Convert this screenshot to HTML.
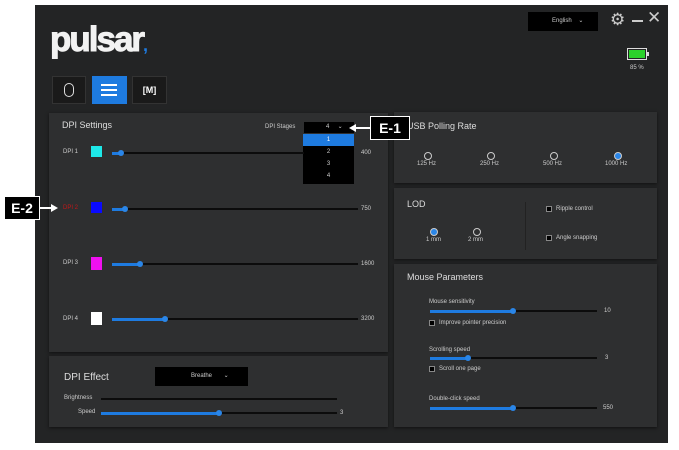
<!DOCTYPE html><html><head><style>
*{margin:0;padding:0;box-sizing:border-box}
body{width:679px;height:450px;background:#fff;position:relative;overflow:hidden;font-family:"Liberation Sans",sans-serif;color:#ddd}
.a{position:absolute}
.app{left:35px;top:5px;width:633px;height:438px;background:#232425}
.p{position:absolute;background:#2e2f30;box-shadow:0 1px 3px #111}
.t{font-size:6px;color:#ccc;position:absolute}
.tr{position:absolute;height:2px;background:#0c0c0c}
.fl{position:absolute;height:3px;background:#1e7be0;top:-0.5px;left:0}
.kn{position:absolute;width:6px;height:6px;border-radius:50%;background:#2a86e8;top:-2px}
.rd{position:absolute;width:8px;height:8px;border-radius:50%;border:1px solid #ccc}
.cb{position:absolute;width:6px;height:6px;background:#000;border:1px solid #888}
.lab{position:absolute;background:#000;color:#fff;font-weight:bold;font-size:14px;border:1px solid #fff;text-align:center;line-height:22px}
</style></head><body>
<div class="a app"></div>
<div class="a" style="left:50px;top:20px;font-size:35px;font-weight:bold;color:#f2f2f2;letter-spacing:-2px;-webkit-text-stroke:1px #f2f2f2">pulsar<span style="color:#1e7be0;font-size:18px;-webkit-text-stroke:0">,</span></div>
<div class="a" style="left:52px;top:76px;width:34px;height:28px;background:#1a1a1a;border:1px solid #333"><div class="a" style="left:11px;top:6px;width:10px;height:14px;border:1.5px solid #ddd;border-radius:5px"></div></div>
<div class="a" style="left:92px;top:76px;width:35px;height:28px;background:#1e7be0"><div class="a" style="left:9px;top:8px;width:16px;height:1.5px;background:#fff"></div><div class="a" style="left:9px;top:13px;width:16px;height:1.5px;background:#fff"></div><div class="a" style="left:9px;top:18px;width:16px;height:1.5px;background:#fff"></div></div>
<div class="a" style="left:132px;top:76px;width:35px;height:28px;background:#1a1a1a;border:1px solid #333;color:#fff;font-size:9px;font-weight:bold;text-align:center;line-height:27px">[M]</div>
<div class="a" style="left:528px;top:12px;width:70px;height:19px;background:#000;font-size:6px;color:#ccc;line-height:19px;padding-left:24px">English &nbsp;&nbsp;&nbsp;⌄</div>
<div class="a" style="left:610px;top:10px;font-size:17px;color:#ccc">⚙</div>
<div class="a" style="left:632px;top:20px;width:11px;height:2px;background:#ccc"></div>
<div class="a" style="left:647px;top:8px;font-size:17px;color:#ccc">✕</div>
<div class="a" style="left:627px;top:48px;width:20px;height:12px;border:1.5px solid #ddd;padding:1px"><div style="width:100%;height:100%;background:#2bd12b"></div></div>
<div class="a" style="left:647px;top:52px;width:2px;height:4px;background:#ddd"></div>
<div class="t" style="left:630px;top:65px">85 %</div>

<div class="p" style="left:49px;top:113px;width:339px;height:239px"></div>
<div class="a" style="left:62px;top:120px;font-size:9px;color:#ddd">DPI Settings</div>
<div class="t" style="left:265px;top:124px">DPI Stages</div>
<div class="a" style="left:304px;top:122px;width:50px;height:11px;background:#000;font-size:6px;color:#ccc;line-height:11px;padding-left:22px">4 &nbsp;&nbsp;&nbsp;&nbsp;⌄</div>
<div class="a" style="left:303px;top:134px;width:51px;height:50px;background:#000;font-size:6px;color:#ccc;text-align:center;line-height:12px">
<div style="background:#1e7be0;color:#fff">1</div><div>2</div><div>3</div><div>4</div></div>
<div class="t" style="left:63px;top:149px">DPI 1</div><div class="a" style="left:91px;top:146px;width:11px;height:11px;background:#1ee8e8"></div>
<div class="tr" style="left:112px;top:152px;width:192px"><div class="fl" style="width:8px"></div><div class="kn" style="left:6px"></div></div><div class="t" style="left:361px;top:150px">400</div>
<div class="t" style="left:63px;top:205px;color:#c01818">DPI 2</div><div class="a" style="left:91px;top:202px;width:11px;height:11px;background:#0a0aff"></div>
<div class="tr" style="left:112px;top:208px;width:246px"><div class="fl" style="width:12px"></div><div class="kn" style="left:10px"></div></div><div class="t" style="left:361px;top:206px">750</div>
<div class="t" style="left:63px;top:260px">DPI 3</div><div class="a" style="left:91px;top:257px;width:11px;height:13px;background:#f010f0"></div>
<div class="tr" style="left:112px;top:263px;width:246px"><div class="fl" style="width:27px"></div><div class="kn" style="left:25px"></div></div><div class="t" style="left:361px;top:261px">1600</div>
<div class="t" style="left:63px;top:316px">DPI 4</div><div class="a" style="left:91px;top:312px;width:11px;height:13px;background:#fff"></div>
<div class="tr" style="left:112px;top:318px;width:246px"><div class="fl" style="width:52px"></div><div class="kn" style="left:50px"></div></div><div class="t" style="left:361px;top:316px">3200</div>

<div class="p" style="left:49px;top:356px;width:339px;height:71px"></div>
<div class="a" style="left:64px;top:372px;font-size:10px;color:#ddd">DPI Effect</div>
<div class="a" style="left:155px;top:367px;width:93px;height:19px;background:#000;font-size:6px;color:#ccc;line-height:19px;padding-left:36px">Breathe &nbsp;&nbsp;&nbsp;&nbsp;&nbsp;&nbsp;⌄</div>
<div class="t" style="left:64px;top:395px">Brightness</div><div class="tr" style="left:101px;top:398px;width:236px"></div>
<div class="t" style="left:78px;top:409px">Speed</div><div class="tr" style="left:101px;top:412px;width:236px"><div class="fl" style="width:118px"></div><div class="kn" style="left:115px"></div></div><div class="t" style="left:340px;top:410px">3</div>

<div class="p" style="left:394px;top:112px;width:263px;height:71px"></div>
<div class="a" style="left:407px;top:121px;font-size:9px;color:#ddd">USB Polling Rate</div>
<div class="rd" style="left:424px;top:152px"></div><div class="t" style="left:417px;top:161px">125 Hz</div>
<div class="rd" style="left:487px;top:152px"></div><div class="t" style="left:480px;top:161px">250 Hz</div>
<div class="rd" style="left:550px;top:152px"></div><div class="t" style="left:543px;top:161px">500 Hz</div>
<div class="rd" style="left:614px;top:152px;background:#2a86e8"></div><div class="t" style="left:605px;top:161px">1000 Hz</div>

<div class="p" style="left:394px;top:188px;width:263px;height:71px"></div>
<div class="a" style="left:407px;top:199px;font-size:9px;color:#ddd">LOD</div>
<div class="rd" style="left:430px;top:228px;background:#2a86e8"></div><div class="t" style="left:426px;top:237px">1 mm</div>
<div class="rd" style="left:473px;top:228px"></div><div class="t" style="left:468px;top:237px">2 mm</div>
<div class="a" style="left:525px;top:202px;width:1px;height:48px;background:#222"></div>
<div class="cb" style="left:546px;top:206px"></div><div class="t" style="left:556px;top:206px">Ripple control</div>
<div class="cb" style="left:546px;top:235px"></div><div class="t" style="left:556px;top:235px">Angle snapping</div>

<div class="p" style="left:394px;top:264px;width:263px;height:163px"></div>
<div class="a" style="left:407px;top:272px;font-size:9px;color:#ddd">Mouse Parameters</div>
<div class="t" style="left:429px;top:299px">Mouse sensitivity</div><div class="tr" style="left:430px;top:310px;width:167px"><div class="fl" style="width:83px"></div><div class="kn" style="left:80px"></div></div><div class="t" style="left:604px;top:308px">10</div>
<div class="cb" style="left:429px;top:320px"></div><div class="t" style="left:439px;top:320px">Improve pointer precision</div>
<div class="t" style="left:429px;top:347px">Scrolling speed</div><div class="tr" style="left:430px;top:357px;width:167px"><div class="fl" style="width:38px"></div><div class="kn" style="left:35px"></div></div><div class="t" style="left:605px;top:355px">3</div>
<div class="cb" style="left:429px;top:366px"></div><div class="t" style="left:439px;top:366px">Scroll one page</div>
<div class="t" style="left:429px;top:396px">Double-click speed</div><div class="tr" style="left:430px;top:407px;width:167px"><div class="fl" style="width:83px"></div><div class="kn" style="left:80px"></div></div><div class="t" style="left:603px;top:405px">550</div>

<div class="lab" style="left:370px;top:116px;width:40px;height:24px">E-1</div>
<div class="a" style="left:355px;top:127px;width:15px;height:2px;background:#fff"></div>
<div class="a" style="left:349px;top:124px;width:0;height:0;border-top:4px solid transparent;border-bottom:4px solid transparent;border-right:7px solid #fff"></div>
<div class="lab" style="left:4px;top:196px;width:36px;height:24px">E-2</div>
<div class="a" style="left:40px;top:207px;width:11px;height:2px;background:#fff"></div>
<div class="a" style="left:51px;top:204px;width:0;height:0;border-top:4px solid transparent;border-bottom:4px solid transparent;border-left:7px solid #fff"></div>
</body></html>
